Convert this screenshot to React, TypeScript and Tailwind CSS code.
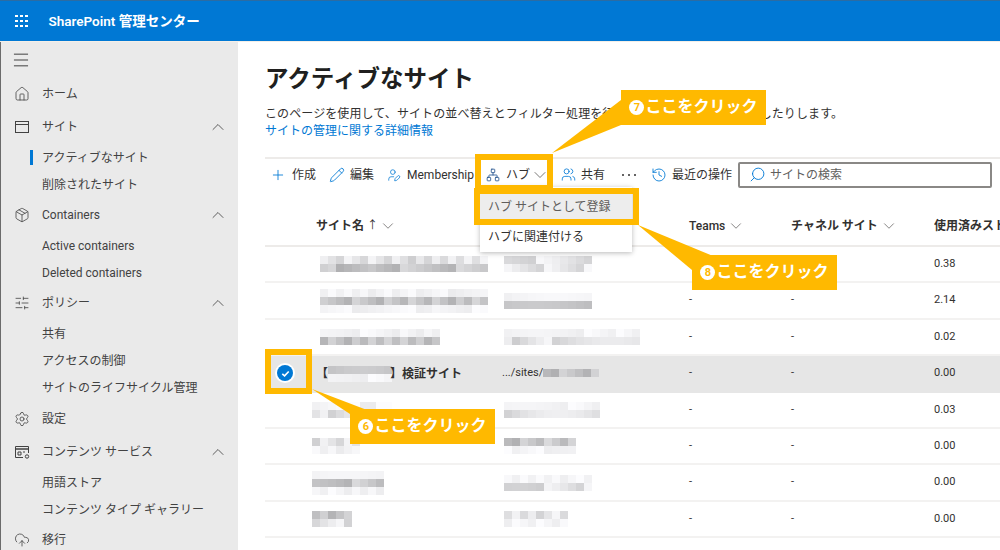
import { ChevronDown, ChevronUp, History, Home, Package, Pencil, Plus, Search, Settings, SlidersHorizontal, CloudUpload, Menu, Network, UserPen, Users } from "lucide-react";

const NAV = [
  { label: "ホーム", icon: <Home className="h-4 w-4" strokeWidth={1.2} /> },
  { label: "サイト", icon: <SiteIcon />, open: true, subs: ["アクティブなサイト", "削除されたサイト"], active: 0 },
  { label: "Containers", icon: <Package className="h-4 w-4" strokeWidth={1.2} />, open: true, subs: ["Active containers", "Deleted containers"] },
  { label: "ポリシー", icon: <SlidersHorizontal className="h-4 w-4" strokeWidth={1.2} />, open: true, subs: ["共有", "アクセスの制御", "サイトのライフサイクル管理"] },
  { label: "設定", icon: <Settings className="h-4 w-4" strokeWidth={1.2} />, top: "mt-px" },
  { label: "コンテンツ サービス", icon: <ContentIcon />, open: true, subs: ["用語ストア", "コンテンツ タイプ ギャラリー"] },
  { label: "移行", icon: <CloudUpload className="h-4 w-4" strokeWidth={1.2} /> },
];

// tones per mosaic row: 0 faint, 1 mid, 2 dark
const ROWS = [
  { name: { x: 55, cols: 21, tones: [1, 2] }, url: { cols: 11, tones: [1, 1] }, size: "0.38" },
  { name: { x: 55, cols: 21, tones: [0, 2, 0] }, url: { cols: 11, tones: [0, 2] }, size: "2.14" },
  { name: { x: 55, cols: 15, tones: [0, 2] }, url: { cols: 17, tones: [0, 1] }, size: "0.02" },
  { selected: true, size: "0.00" },
  { name: { x: 47, cols: 10, tones: [0, 1] }, url: { cols: 12, tones: [0, 1] }, size: "0.03" },
  { name: { x: 47, cols: 6, tones: [1, 0] }, url: { cols: 9, tones: [2, 0] }, size: "0.00" },
  { name: { x: 47, cols: 9, tones: [0, 2, 0] }, url: { cols: 11, tones: [0, 1] }, size: "0.00" },
  { name: { x: 47, cols: 5, tones: [2, 1] }, url: { cols: 8, tones: [1, 0] }, size: "0.00" },
];

function SiteIcon() {
  return (
    <svg viewBox="0 0 16 16" className="h-4 w-4" fill="none" stroke="currentColor" strokeWidth="1">
      <rect x="1.5" y="2.5" width="13" height="11" />
      <path d="M1.5 5.5h13" />
    </svg>
  );
}

function ContentIcon() {
  return (
    <svg viewBox="0 0 16 16" className="h-4 w-4" fill="none" stroke="currentColor" strokeWidth="1">
      <path d="M9 13.5H1.5v-11h13V9" />
      <path d="M1.5 5h13" strokeWidth="1.5" />
      <path d="M4 8h3v3H4zM9 8h2" />
      <circle cx="13" cy="12.5" r="1.7" />
    </svg>
  );
}

function Mosaic({ cols, tones, seed }: { cols: number; tones: number[]; seed: number }) {
  const base = [244, 226, 198];
  return (
    <div className="flex flex-col">
      {tones.map((tone, r) => (
        <div key={r} className="flex">
          {Array.from({ length: cols }).map((_, c) => {
            const n = Math.abs(Math.sin(seed * 12.9 + r * 78.2 + c * 37.7) * 43758.5) % 1;
            const v = Math.min(252, Math.round(base[tone] + (n - 0.5) * (tone === 0 ? 18 : 44)));
            return <div key={c} className="h-2 w-2" style={{ backgroundColor: `rgb(${v},${v},${v + 2})` }} />;
          })}
        </div>
      ))}
    </div>
  );
}

function Callout({ num, className }: { num: string; className: string }) {
  return (
    <div className={`absolute flex h-[35px] w-[145px] items-center justify-center gap-px bg-[#ffb900] pb-px text-[16px] font-bold text-white ${className}`}>
      <span className="flex h-[15px] w-[15px] items-center justify-center rounded-full bg-white text-[11px] leading-none text-[#ffb900]">{num}</span>
      ここをクリック
    </div>
  );
}

function ToolItem({ icon, label, className }: { icon: React.ReactNode; label: string; className: string }) {
  return (
    <div className={`flex items-center whitespace-nowrap ${className}`}>
      {icon}
      <span>{label}</span>
    </div>
  );
}

export default function App() {
  return (
    <div className="relative h-[550px] w-[1000px] overflow-hidden bg-white font-['Roboto','Noto_Sans_CJK_JP',sans-serif] text-[12px] text-[#323130]">
      {/* Top bar */}
      <header className="flex h-[41px] items-center border-t border-t-[#2b6ca3] bg-[#0078d4] pl-[15px] text-white">
        <div className="grid grid-cols-3 gap-[2.5px]">
          {Array.from({ length: 9 }).map((_, i) => (
            <div key={i} className="h-[2.5px] w-[2.5px] bg-white" />
          ))}
        </div>
        <div className="ml-[21px] text-[13.5px] font-semibold">SharePoint 管理センター</div>
      </header>

      <div className="flex h-[509px] border-t border-t-[#f4efe8]">
        {/* Sidebar */}
        <aside className="h-full w-[238px] shrink-0 border-l border-l-[#6b6b6b] bg-[#eaeaea] text-[#424242]">
          <div className="flex h-[36px] items-center pl-[10px]">
            <Menu className="h-5 w-5" strokeWidth={1.2} />
          </div>
          {NAV.map((item) => (
            <div key={item.label} className={item.top}>
              <div className="mb-px flex h-[32px] items-center pl-[13px]">
                {item.icon}
                <span className="ml-3 flex-1 whitespace-nowrap">{item.label}</span>
                {item.open && <ChevronUp className="mr-[10px] h-5 w-5" strokeWidth={1} />}
              </div>
              {item.subs && (
                <div className="pb-px">
                  {item.subs.map((sub, i) => (
                    <div key={sub} className="relative flex h-[27px] items-center pl-[41px] whitespace-nowrap">
                      {item.active === i && <div className="absolute left-[29px] top-[6px] h-[15px] w-[3px] bg-[#0078d4]" />}
                      {sub}
                    </div>
                  ))}
                </div>
              )}
            </div>
          ))}
        </aside>

        {/* Main */}
        <main className="min-w-0 flex-1 overflow-hidden pl-[27px]">
          <h1 className="mt-[20px] text-[23.5px] font-bold leading-[34px] text-[#201f1e]">アクティブなサイト</h1>
          <p className="mt-[10px] whitespace-nowrap leading-[17px] tracking-[0.1px]">このページを使用して、サイトの並べ替えとフィルター処理を行い、サイト設定を編集変更したりします。</p>
          <a className="block leading-[17px] text-[#0078d4]">サイトの管理に関する詳細情報</a>

          {/* Toolbar */}
          <div className="mt-[17px] flex h-[33px] items-center border-t-2 border-t-[#edebe9] pl-[5px]">
            <ToolItem className="gap-[6px]" icon={<Plus className="h-4 w-4 text-[#0078d4]" strokeWidth={1.3} />} label="作成" />
            <ToolItem className="ml-[13px] gap-[5px]" icon={<Pencil className="h-4 w-4 text-[#0078d4]" strokeWidth={1.3} />} label="編集" />
            <ToolItem className="ml-[13px] w-[87px] gap-[6px]" icon={<UserPen className="h-4 w-4 text-[#0078d4]" strokeWidth={1.3} />} label="Membership" />
            <ToolItem className="ml-[12px] gap-[6px]" icon={<Network className="h-[14px] w-[14px] text-[#1f4e8c]" strokeWidth={1.4} />} label="ハブ" />
            <ChevronDown className="h-5 w-5 text-[#605e5c]" strokeWidth={1} />
            <ToolItem className="ml-[11px] gap-[5px]" icon={<Users className="h-[15px] w-[15px] text-[#0078d4]" strokeWidth={1.3} />} label="共有" />
            <div className="ml-[17px] flex w-[14px] justify-between">
              <div className="h-[2px] w-[2px] rounded-full bg-[#323130]" />
              <div className="h-[2px] w-[2px] rounded-full bg-[#323130]" />
              <div className="h-[2px] w-[2px] rounded-full bg-[#323130]" />
            </div>
            <ToolItem className="ml-[15px] gap-[5px]" icon={<History className="h-4 w-4 text-[#0078d4]" strokeWidth={1.3} />} label="最近の操作" />
            <div className="ml-[6px] flex h-[26px] w-[254px] shrink-0 items-center gap-[4px] rounded-[2px] border-2 border-[#8a8886] pl-[9px] text-[#605e5c]">
              <Search className="h-[17px] w-[17px] -scale-x-100 text-[#0078d4]" strokeWidth={1.3} />
              サイトの検索
            </div>
          </div>

          {/* Table */}
          <div className="mt-[17px] w-[735px]">
            <div className="grid h-[40px] grid-cols-[51px_186px_187px_102px_143px_66px] items-center border-b-2 border-b-[#edebe9] whitespace-nowrap font-semibold">
              <div />
              <div className="col-start-2 flex items-center font-bold">
                サイト名 <span className="ml-[3px] text-[11px] font-normal">↑</span>
                <ChevronDown className="ml-px h-[18px] w-[18px] text-[#605e5c]" strokeWidth={1} />
              </div>
              <div />
              <div className="flex items-center font-medium">
                Teams
                <ChevronDown className="ml-[2px] h-[18px] w-[18px] text-[#605e5c]" strokeWidth={1} />
              </div>
              <div className="flex items-center font-bold">
                チャネル サイト
                <ChevronDown className="ml-[2px] h-[18px] w-[18px] text-[#605e5c]" strokeWidth={1} />
              </div>
              <div className="overflow-hidden font-bold">使用済みストレージ</div>
            </div>

            {ROWS.map((row, i) => (
              <div
                key={i}
                className={`grid h-[36.4px] grid-cols-[51px_186px_187px_102px_143px_66px] items-center border-b-2 text-[11px] ${row.selected ? "border-b-transparent bg-[#e6e6e6]" : "border-b-[#f3f2f1]"}`}
              >
                {row.selected ? (
                  <>
                    <div className="flex pl-[12px]">
                      <div className="flex h-[16px] w-[16px] items-center justify-center rounded-full bg-[#0078d4] ring-2 ring-white">
                        <svg viewBox="0 0 12 12" className="h-[11px] w-[11px]" fill="none" stroke="white" strokeWidth="1.8">
                          <path d="M2.5 6.3 5 8.5 9.5 3.8" />
                        </svg>
                      </div>
                    </div>
                    <div className="flex items-center pt-[2px] text-[12px] font-bold">
                      【
                      <Mosaic cols={8} tones={[2, 0]} seed={7} />
                      <span className="w-[10px] -translate-x-[2px]">】</span>検証サイト
                    </div>
                    <div className="flex items-center">
                      .../sites/
                      <Mosaic cols={7} tones={[2]} seed={92} />
                    </div>
                  </>
                ) : (
                  <>
                    <div />
                    <div className="relative h-full">
                      <div className="absolute top-1/2 -translate-y-1/2" style={{ left: row.name!.x - 51 }}>
                        <Mosaic cols={row.name!.cols} tones={row.name!.tones} seed={i + 1} />
                      </div>
                    </div>
                    <div className="pl-[2px]">
                      <Mosaic cols={row.url!.cols} tones={row.url!.tones} seed={i + 20} />
                    </div>
                  </>
                )}
                <div>-</div>
                <div>-</div>
                <div>{row.size}</div>
              </div>
            ))}
          </div>
        </main>
      </div>

      {/* Hub dropdown */}
      <div className="absolute left-[480px] top-[187px] h-[65px] w-[152px] bg-white shadow-[0_1px_5px_rgba(0,0,0,0.28)]">
        <div className="mt-[7px] flex h-[25px] items-center bg-[#ededed] pl-[8px] text-[#605e5c]">ハブ サイトとして登録</div>
        <div className="mt-[5px] flex h-[25px] items-center pl-[8px]">ハブに関連付ける</div>
      </div>

      {/* Tutorial annotations */}
      <div className="absolute left-[475px] top-[154px] h-[34px] w-[78px] border-[6px] border-b-[3px] border-[#ffb900]" />
      <div className="absolute left-[474px] top-[188px] h-[37px] w-[165px] border-[6px] border-[#ffb900]" />
      <div className="absolute left-[265px] top-[349px] h-[45px] w-[47px] border-[6px] border-[#ffb900]" />
      <svg className="pointer-events-none absolute left-0 top-0" width="1000" height="550" fill="#ffb900">
        <polygon points="621,100 552,153 621,125" />
        <polygon points="638,225 713,256 692,270" />
        <polygon points="312,389 367,410 350,414" />
      </svg>
      <Callout num="7" className="left-[621px] top-[90px]" />
      <Callout num="8" className="left-[692px] top-[255px]" />
      <Callout num="6" className="left-[350px] top-[409px]" />
    </div>
  );
}
